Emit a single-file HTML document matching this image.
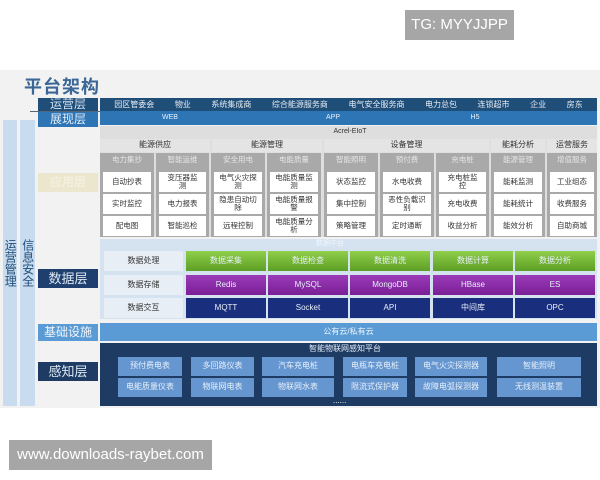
<!DOCTYPE html>
<html><head><meta charset="utf-8"><style>
*{margin:0;padding:0;box-sizing:border-box}
body{width:600px;height:480px;background:#fff;position:relative;overflow:hidden;font-family:"Liberation Sans","Noto Sans CJK SC",sans-serif}
.a{position:absolute;display:flex;align-items:center;justify-content:center;text-align:center;line-height:1.05}
.c{font-size:7.5px;color:#333;background:#fff}
.s{font-size:7.5px;color:#e6e6e6;background:#a9a9a9}
.h{font-size:8px;color:#333;background:#e4e4e4}
</style></head><body>
<div class="a" style="left:405px;top:10px;width:109px;height:30px;background:#a6a6a6;color:#fff;font-size:15px">TG: MYYJJPP</div>
<div style="position:absolute;left:0;top:70px;width:600px;height:338px;background:#f2f2f2"></div>
<div style="position:absolute;left:24px;top:73px;font-size:18px;font-weight:bold;color:#3a6796;letter-spacing:1px">平台架构</div>
<div class="a" style="left:3px;top:120px;width:14px;height:286px;background:#c8dbef;font-size:12px;color:#1f4e79;writing-mode:vertical-rl">运营管理</div>
<div class="a" style="left:20px;top:120px;width:15px;height:286px;background:#c8dbef;font-size:12px;color:#1f4e79;writing-mode:vertical-rl">信息安全</div>
<div class="a" style="left:38px;top:98px;width:60px;height:13px;background:#1f4e79;color:#cfe0f3;font-size:12px">运营层</div>
<div class="a" style="left:38px;top:112px;width:60px;height:15px;background:#2e75b6;color:#e3eefa;font-size:12px">展现层</div>
<div class="a" style="left:38px;top:173px;width:60px;height:19px;background:#ece6cf;color:#f7f3e3;font-size:12px">应用层</div>
<div class="a" style="left:38px;top:269px;width:60px;height:19px;background:#1f3f6e;color:#dde8f5;font-size:13px">数据层</div>
<div class="a" style="left:38px;top:324px;width:60px;height:17px;background:#5b9bd5;color:#eef5fc;font-size:12px">基础设施</div>
<div class="a" style="left:38px;top:362px;width:60px;height:19px;background:#1e3b63;color:#dde8f5;font-size:13px">感知层</div>
<div style="position:absolute;left:30px;top:111px;width:70px;height:1px;background:#567"></div>
<div style="position:absolute;left:100px;top:98px;width:497px;height:13px;background:#1f4e79;color:#e8eef6;font-size:8px;display:flex;justify-content:space-around;align-items:center;padding:0 4px"><span>园区管委会</span><span>物业</span><span>系统集成商</span><span>综合能源服务商</span><span>电气安全服务商</span><span>电力总包</span><span>连锁超市</span><span>企业</span><span>房东</span></div>
<div style="position:absolute;left:100px;top:111px;width:497px;height:14px;background:#2e75b6"></div>
<div class="a" style="left:155px;top:111px;width:30px;height:14px;color:#e8f0f8;font-size:7px">WEB</div>
<div class="a" style="left:318px;top:111px;width:30px;height:14px;color:#e8f0f8;font-size:7px">APP</div>
<div class="a" style="left:460px;top:111px;width:30px;height:14px;color:#e8f0f8;font-size:7px">H5</div>
<div style="position:absolute;left:100px;top:126px;width:497px;height:111px;background:#dedede"></div>
<div class="a" style="left:320px;top:126px;width:60px;height:12px;font-size:7px;color:#333">Acrel-EIoT</div>
<div class="a h" style="left:100px;top:139px;width:110px;height:13px">能源供应</div>
<div class="a h" style="left:212px;top:139px;width:110px;height:13px">能源管理</div>
<div class="a h" style="left:324px;top:139px;width:165px;height:13px">设备管理</div>
<div class="a h" style="left:491px;top:139px;width:54px;height:13px">能耗分析</div>
<div class="a h" style="left:547px;top:139px;width:50px;height:13px">运营服务</div>
<div id="g"></div>
<script>
var cols=[[100,54,"电力集抄",["自动抄表","实时监控","配电图"]],[156,53,"智能运维",["变压器监测","电力报表","智能巡检"]],[211,54,"安全用电",["电气火灾探测","隐患自动切除","远程控制"]],[267,54,"电能质量",["电能质量监测","电能质量报警","电能质量分析"]],[324,54,"智能照明",["状态监控","集中控制","策略管理"]],[380,54,"预付费",["水电收费","恶性负载识别","定时通断"]],[436,53,"充电桩",["充电桩监控","充电收费","收益分析"]],[491,54,"能源管理",["能耗监测","能耗统计","能效分析"]],[547,50,"增值服务",["工业组态","收费服务","自助商城"]]];
var h="";
cols.forEach(function(c){h+='<div class="a s" style="left:'+c[0]+'px;top:153px;width:'+c[1]+'px;height:84px;align-items:flex-start;padding-top:3px">'+c[2]+'</div>';
[172,194,216].forEach(function(y,i){h+='<div class="a c" style="left:'+(c[0]+3)+'px;top:'+y+'px;width:'+(c[1]-6)+'px;height:20px;padding:0 5px">'+c[3][i]+'</div>';});});
h+='<div style="position:absolute;left:100px;top:239px;width:497px;height:80px;background:#d5e3f1"></div>';
h+='<div class="a" style="left:310px;top:239px;width:40px;height:10px;font-size:7px;color:#f0f5fb">数据中台</div>';
var rows=[[251,"数据处理",["数据采集","数据检查","数据清洗","数据计算","数据分析"],"linear-gradient(#8fcf4a,#5d9e25)"],[275,"数据存储",["Redis","MySQL","MongoDB","HBase","ES"],"linear-gradient(#9b3bb8,#7a1f96)"],[298,"数据交互",["MQTT","Socket","API","中间库","OPC"],"#1a2e7e"]];
var xs=[186,268,350,433,515];
rows.forEach(function(r){h+='<div class="a" style="left:104px;top:'+r[0]+'px;width:79px;height:20px;background:#e8eef5;font-size:8px;color:#333">'+r[1]+'</div>';
xs.forEach(function(x,i){h+='<div class="a" style="left:'+x+'px;top:'+r[0]+'px;width:80px;height:20px;background:'+r[3]+';font-size:8px;color:#e8f0f8">'+r[2][i]+'</div>';});});
h+='<div class="a" style="left:100px;top:323px;width:497px;height:18px;background:#5b9bd5;font-size:8px;color:#eef5fc">公有云/私有云</div>';
h+='<div style="position:absolute;left:100px;top:343px;width:497px;height:63px;background:#1e3b63"></div>';
h+='<div class="a" style="left:300px;top:344px;width:90px;height:11px;font-size:8px;color:#e3ecf6">智能物联网感知平台</div>';
var sc=[[118,64,"预付费电表","电能质量仪表"],[191,63,"多回路仪表","物联网电表"],[262,72,"汽车充电桩","物联网水表"],[343,64,"电瓶车充电桩","限流式保护器"],[415,72,"电气火灾探测器","故障电弧探测器"],[497,84,"智能照明","无线测温装置"]];
sc.forEach(function(s){h+='<div class="a" style="left:'+s[0]+'px;top:357px;width:'+s[1]+'px;height:19px;background:#6596d0;font-size:8px;color:#e8f0fa">'+s[2]+'</div>';
h+='<div class="a" style="left:'+s[0]+'px;top:378px;width:'+s[1]+'px;height:19px;background:#6596d0;font-size:8px;color:#e8f0fa">'+s[3]+'</div>';});
h+='<div style="position:absolute;left:333px;top:396px;font-size:8px;color:#fff">......</div>';
document.getElementById('g').outerHTML=h;
</script>
<div class="a" style="left:9px;top:440px;width:203px;height:30px;background:#a6a6a6;color:#fff;font-size:15px">www.downloads-raybet.com</div>
</body></html>
